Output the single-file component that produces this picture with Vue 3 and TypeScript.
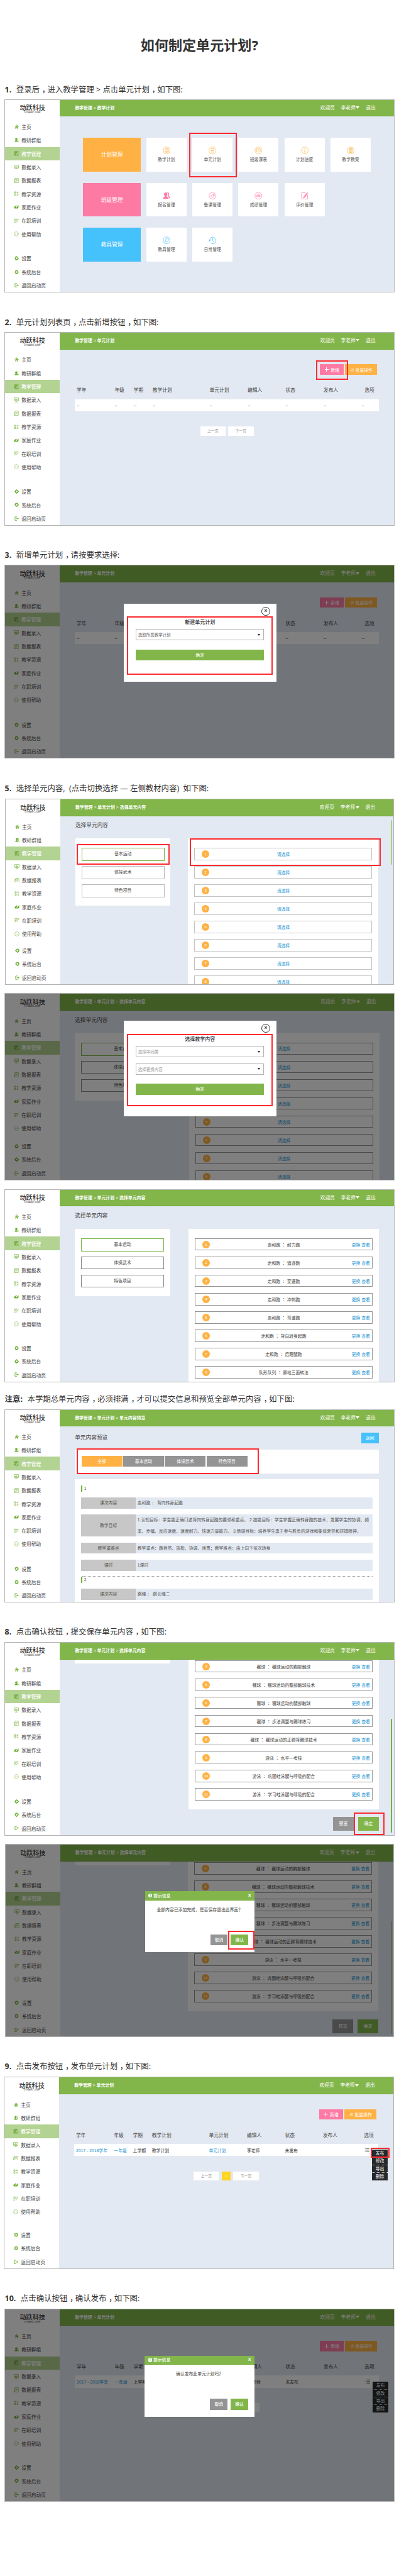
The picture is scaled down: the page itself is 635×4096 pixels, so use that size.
<script setup lang="ts">
interface NavItem { icon: string; label: string }
interface Card { icon: string; label: string }
interface Group { name: string; tone: string; cards: Card[] }
interface Shot {
  id: string
  step?: string
  text?: string
  crumbs: string[]
  view: 'home' | 'list' | 'select' | 'preview' | 'tail'
  filled?: boolean
  dim?: boolean
  form?: { title: string; fields: string[]; serif?: boolean }
  alert?: string
  marks?: string[]
  scroll?: boolean
}

const nav: NavItem[] = [
  { icon: 'i-home', label: '主页' },
  { icon: 'i-people', label: '教研群组' },
  { icon: 'i-book', label: '教学管理' },
  { icon: 'i-monitor', label: '数据录入' },
  { icon: 'i-report', label: '数据报表' },
  { icon: 'i-grid', label: '教学资源' },
  { icon: 'i-leaf', label: '家庭作业' },
  { icon: 'i-write', label: '在职培训' },
  { icon: 'i-dots', label: '使用帮助' },
]
const navFoot: NavItem[] = [
  { icon: 'i-gear', label: '设置' },
  { icon: 'i-gear', label: '系统后台' },
  { icon: 'i-exit', label: '返回启动页' },
]

const groups: Group[] = [
  {
    name: '计划管理', tone: 'orange',
    cards: [
      { icon: 'c-plan', label: '教学计划' },
      { icon: 'c-unit', label: '单元计划' },
      { icon: 'c-table', label: '班级课表' },
      { icon: 'c-gauge', label: '计划进度' },
      { icon: 'c-case', label: '教学教案' },
    ],
  },
  {
    name: '班级管理', tone: 'pink',
    cards: [
      { icon: 'i-people', label: '报名管理' },
      { icon: 'c-tag', label: '备课管理' },
      { icon: 'c-score', label: '成绩管理' },
      { icon: 'c-edit', label: '评价管理' },
    ],
  },
  {
    name: '教具管理', tone: 'blue',
    cards: [
      { icon: 'c-tool', label: '教具管理' },
      { icon: 'c-clock', label: '日常管理' },
    ],
  },
]

const columns = ['学年', '年级', '学期', '教学计划', '单元计划', '编辑人', '状态', '发布人', '选项']
const record = ['2017 - 2018学年', '一年级', '上学期', '教学计划', '单元计划', '李老师', '未发布', '']
const linked = [0, 1, 4]
const kinds = ['基本运动', '体操武术', '特色项目']
const lessons = [
  ['走和跑', '耐力跑'], ['走和跑', '追逐跑'], ['走和跑', '变速跑'], ['走和跑', '冲刺跑'],
  ['走和跑', '弯道跑'], ['走和跑', '背向转身起跑'], ['走和跑', '后蹬腿跑'], ['队形队列', '原地三面转法'],
]
const tail = [
  ['毽球', '毽球运动的胸部触球'], ['毽球', '毽球运动的腹部触球技术'], ['毽球', '毽球运动的腿部触球'],
  ['毽球', '步法调整与踢球练习'], ['毽球', '毽球运动的正脚背踢球技术'], ['游泳', '水平一考核'],
  ['游泳', '巩固蛙泳腿与呼吸的配合'], ['游泳', '学习蛙泳腿与呼吸的配合'],
]
const details = [
  { label: '课次内容', lines: ['走和跑 ： 背向转身起跑'] },
  {
    label: '教学目标',
    lines: [
      '1.认知目标：学生能正确口述背向转身起跑的要领和重点。 2.技能目标：学生掌握正确转身跑的技术，发展学生的协调、频',
      '率、步幅、反应速度、速度耐力、快速力量能力。 3.情感目标：培养学生勇于参与胜负的游戏和集体荣誉和拼搏精神。',
    ],
  },
  { label: '教学重难点', lines: ['教学重点：跑自然、放松、协调、连贯；教学难点：由上向下依次转身'] },
  { label: '课时', lines: ['1课时'] },
]

const shots: Shot[] = [
  { id: 's1', step: '1.', text: '登录后，进入教学管理 > 点击单元计划，如下图:', crumbs: ['教学管理', '教学计划'], view: 'home', marks: ['m-unit'] },
  { id: 's2', step: '2.', text: '单元计划列表页，点击新增按钮，如下图:', crumbs: ['教学管理', '单元计划'], view: 'list', marks: ['m-add'] },
  { id: 's3', step: '3.', text: '新增单元计划，请按要求选择:', crumbs: ['教学管理', '单元计划'], view: 'list', dim: true, form: { title: '新建单元计划', fields: ['选取所属教学计划'] }, marks: ['m-form1'] },
  { id: 's4', step: '5.', text: '选择单元内容,\u00a0\u00a0(点击切换选择 — 左侧教材内容)\u00a0\u00a0如下图:', crumbs: ['教学管理', '单元计划', '选择单元内容'], view: 'select', marks: ['m-kind', 'm-lesson'], scroll: true },
  { id: 's5', crumbs: ['教学管理', '单元计划', '选择单元内容'], view: 'select', dim: true, form: { title: '选择教学内容', fields: ['选择中间类', '选择更换内容'], serif: true }, marks: ['m-form2'] },
  { id: 's6', crumbs: ['教学管理', '单元计划', '选择单元内容'], view: 'select', filled: true },
  { id: 's7', step: '注意:', text: '本学期总单元内容，必须排满，才可以提交信息和预览全部单元内容，如下图:', crumbs: ['教学管理', '单元计划', '单元内容预览'], view: 'preview', marks: ['m-tabs'] },
  { id: 's8', step: '8.', text: '点击确认按钮，提交保存单元内容，如下图:', crumbs: ['教学管理', '单元计划', '选择单元内容'], view: 'tail', marks: ['m-submit'], scroll: true },
  { id: 's9', crumbs: ['教学管理', '单元计划', '选择单元内容'], view: 'tail', dim: true, alert: '全部内容已添加完成，是否保存退出此界面？', marks: ['m-confirm'], scroll: true },
  { id: 's10', step: '9.', text: '点击发布按钮，发布单元计划，如下图:', crumbs: ['教学管理', '单元计划'], view: 'list', filled: true, marks: ['m-publish'] },
  { id: 's11', step: '10.', text: '点击确认按钮，确认发布，如下图:', crumbs: ['教学管理', '单元计划'], view: 'list', filled: true, dim: true, alert: '确认发布此单元计划吗？' },
]

const pieces = (text: string): string[] => text.split(/(，)/)
</script>

<template>
  <svg class="sprite" aria-hidden="true">
    <symbol id="i-home" viewBox="0 0 24 24"><path d="M2 12 12 3l10 9" fill="none" stroke="currentColor" stroke-width="3" /><path d="M5 13.500 12 7l7 6.500V22h-4.500v-6h-5v6H5z" fill="currentColor" /></symbol>
    <symbol id="i-people" viewBox="0 0 24 24"><path d="M9 2c3.200 0 5 2.300 5 5.500 0 2.500-1 4.500-2 5.500v2c3 1 6 2 6 5v1.500H1V20c0-3 2.500-4 5-5v-2c-1.200-1-2-3-2-5.500C4 4.300 5.800 2 9 2z" fill="currentColor" /><path d="M14 2.500c3 0 4.500 2 4.500 4.600 0 2.200-1 3.900-2.300 4.900v1.500c3.500 1 6 2.500 6 5h-2.500" fill="none" stroke="currentColor" stroke-width="2.400" /></symbol>
    <symbol id="i-book" viewBox="0 0 24 24"><path d="M3 1h19v22H3zM0 5h4v3H0zm0 10h4v3H0z" fill="#7cb14b" /><path d="M20 6l-8 10-1 3 3-1 8-10z" fill="#d3e8bd" /></symbol>
    <symbol id="i-monitor" viewBox="0 0 24 24"><path d="M1.500 2h21v14h-21zM12 16v5M6 22h12M7 12V9m4 3V6m4 6V8M5 12h13" fill="none" stroke="currentColor" stroke-width="2" /></symbol>
    <symbol id="i-report" viewBox="0 0 24 24"><path d="M6 1.500h16v21H2v-15h4zM6 7v15M10 7h8m-8 4h8m-8 4h6" fill="none" stroke="currentColor" stroke-width="1.800" /></symbol>
    <symbol id="i-grid" viewBox="0 0 24 24"><path d="M3 3h6v6H3zM3 13h6v7H3zM14 4h8m-8 4h8m-8 7h8m-8 4h8" fill="none" stroke="currentColor" stroke-width="2" /></symbol>
    <symbol id="i-leaf" viewBox="0 0 24 24"><path d="M1 15c0-3 2-5 5-5 1-4 5-6 9-4l-5 7v3l3-1 9-11c2 4 1 9 0 12-1 3-3 4-5 4H6c-3 0-5-2-5-5z" fill="currentColor" /></symbol>
    <symbol id="i-write" viewBox="0 0 24 24"><path d="M1 4h19M1 9h14M1 14h10M1 19h8M23 4l-8 12-2 4" fill="none" stroke="currentColor" stroke-width="2" /></symbol>
    <symbol id="i-dots" viewBox="0 0 24 24"><circle cx="12" cy="12" r="10.500" fill="none" stroke="currentColor" stroke-width="1.500" /><path d="M6 11h2.500v2.500H6zm5 0h2.500v2.500H11zm5 0h2.500v2.500H16z" fill="currentColor" /></symbol>
    <symbol id="i-gear" viewBox="0 0 24 24"><circle cx="12" cy="12" r="6.500" fill="none" stroke="currentColor" stroke-width="4" /><path d="M12 1v4m0 14v4M1 12h4m14 0h4M4.500 4.500l2.500 2.500m10 10 2.500 2.500m0-15L17 7M7 17l-2.500 2.500" stroke="currentColor" stroke-width="3.500" /></symbol>
    <symbol id="i-exit" viewBox="0 0 24 24"><path d="M13 3H3v18h10M9 12h9" fill="none" stroke="currentColor" stroke-width="3" /><path d="M16 6.500 23 12l-7 5.500z" fill="currentColor" /></symbol>
    <symbol id="c-plan" viewBox="0 0 24 24"><g fill="none" stroke="currentColor" stroke-width="1.300"><circle cx="12" cy="12" r="10.500" /><rect x="7" y="6.500" width="10.500" height="11" rx="1.500" /><path d="M7 14.500h10.500M10 7v4h5V7M12.500 7v2" /></g></symbol>
    <symbol id="c-unit" viewBox="0 0 24 24"><g fill="none" stroke="currentColor" stroke-width="1.200"><circle cx="12" cy="12" r="11" /><path d="M6.500 7h11m-11 5h11m-11 5h11" stroke-width="1.800" /></g></symbol>
    <symbol id="c-table" viewBox="0 0 24 24"><g fill="none" stroke="currentColor" stroke-width="1.300"><circle cx="12" cy="12" r="10.500" /><path d="M6.500 7h4.500l1 1 1-1h4.500v9.500H13l-1 1-1-1H6.500zM12 8v5" /></g></symbol>
    <symbol id="c-gauge" viewBox="0 0 24 24"><g fill="none" stroke="currentColor" stroke-width="1.300"><circle cx="12" cy="12" r="10.500" /><path d="M12 5v10M6 12H4.500m15 0H18M7.500 7.500l-1-1m10 1 1-1" /><circle cx="12" cy="16.500" r="1.600" /></g></symbol>
    <symbol id="c-case" viewBox="0 0 24 24"><g fill="none" stroke="currentColor" stroke-width="1.300"><circle cx="12" cy="12" r="10.500" /><rect x="7.500" y="6.500" width="9" height="11.500" fill="currentColor" fill-opacity=".45" /><path d="M10 5.500h4v2h-4z" /></g></symbol>
    <symbol id="c-tag" viewBox="0 0 24 24"><g fill="none" stroke="currentColor" stroke-width="1.300"><circle cx="12" cy="12" r="10.500" /><path d="M6 13l6-6 5.500.500.500 4.500-6.500 6z" /><circle cx="14.500" cy="10" r="1.500" /></g></symbol>
    <symbol id="c-score" viewBox="0 0 24 24"><g fill="none" stroke="currentColor" stroke-width="1.300"><circle cx="12" cy="12" r="10.500" /><path d="M7 10l-1 6M10 9.500h2.500l-.800 6H9.200zM14.800 9.500h2.700l-.800 6H14zM6 7h10" /></g></symbol>
    <symbol id="c-edit" viewBox="0 0 24 24"><path d="M14 3H2v20h18V9" fill="none" stroke="currentColor" stroke-width="1.500" /><path d="M17 4l3 3-9 11-5 3 2-5.500zM19 1.500l3 3-1 1.200-3-3z" fill="currentColor" /></symbol>
    <symbol id="c-tool" viewBox="0 0 24 24"><g fill="none" stroke="currentColor" stroke-width="1.300"><circle cx="12" cy="12" r="10.500" /><path d="M9 13c-1-4 2-7 5-7s5 3 4 5.500-4 4.500-7 3.500l-4 3-1-1z" /></g></symbol>
    <symbol id="c-clock" viewBox="0 0 24 24"><path d="M3 13.500A10 10.300 0 1 1 7 20.500M12.500 5v7l5 5.500" fill="none" stroke="currentColor" stroke-width="1.500" /><path d="M.300 11h5.400L3 15.500z" fill="currentColor" /></symbol>
    <symbol id="i-batch" viewBox="0 0 24 24"><g fill="none" stroke="currentColor" stroke-width="2"><circle cx="6.500" cy="15.500" r="4" /><circle cx="17" cy="16" r="5" /><circle cx="17" cy="7" r="3.500" /><path d="M4 8l7-4" /></g></symbol>
    <symbol id="i-menu" viewBox="0 0 24 24"><path d="M1 4h3m3 0h16M1 12h3m3 0h16M1 20h3m3 0h16" stroke="currentColor" stroke-width="2.400" /></symbol>
  </svg>

  <main class="page">
    <h1>如何制定单元计划?</h1>

    <section v-for="s in shots" :key="s.id" :class="['block', s.id]">
      <p v-if="s.step" class="step">
        <b>{{ s.step }}</b><span v-for="(p, i) in pieces(s.text ?? '')" :key="i" :class="{ comma: p === '，' }">{{ p }}</span>
      </p>

      <div class="shot">
        <aside class="side">
          <div class="logo"><strong>动跃科技</strong><small>DYNAMIC JUMP</small></div>
          <ul class="nav">
            <li v-for="(n, i) in nav" :key="n.label" :class="{ on: i === 2 }">
              <svg :class="['ico', n.icon]"><use :href="'#' + n.icon" /></svg>{{ n.label }}
            </li>
          </ul>
          <ul class="nav foot">
            <li v-for="n in navFoot" :key="n.label"><svg :class="['ico', n.icon]"><use :href="'#' + n.icon" /></svg>{{ n.label }}</li>
          </ul>
        </aside>

        <div class="main">
          <header class="bar">
            <div class="crumbs">
              <template v-for="(c, i) in s.crumbs" :key="c"><i v-if="i"> &gt; </i><b>{{ c }}</b></template>
            </div>
            <div class="user"><span>欢迎页</span><span class="who">李老师<i class="tri"></i></span><span>退出</span></div>
          </header>

          <div v-if="s.view === 'home'" class="home">
            <div v-for="g in groups" :key="g.name" :class="['group', g.tone]">
              <div class="tile">{{ g.name }}</div>
              <div v-for="c in g.cards" :key="c.label" class="card">
                <svg><use :href="'#' + c.icon" /></svg>
                <span>{{ c.label }}</span>
              </div>
            </div>
          </div>

          <div v-else-if="s.view === 'list'" class="list">
            <div class="tools">
              <span class="btn add"><i class="plus"></i>新增</span>
              <span class="btn batch"><svg><use href="#i-batch" /></svg>批量操作</span>
            </div>
            <div class="row head"><span v-for="c in columns" :key="c">{{ c }}</span></div>
            <div v-if="s.filled" class="row body">
              <span v-for="(c, i) in record" :key="i" :class="{ link: linked.includes(i) }">{{ c }}</span>
              <span class="opt"><svg><use href="#i-menu" /></svg></span>
            </div>
            <div v-else class="row body"><span v-for="c in columns" :key="c">--</span></div>
            <div class="pager"><span>上一页</span><em v-if="s.filled">1</em><span>下一页</span></div>
          </div>

          <div v-else-if="s.view === 'select'" class="select">
            <h2>选择单元内容</h2>
            <div class="cols">
              <div class="kinds">
                <span v-for="(k, i) in kinds" :key="k" :class="{ on: i === 0, dark: s.filled || s.dim }">{{ k }}</span>
              </div>
              <div class="lessons">
                <div v-for="(l, i) in lessons" :key="i" :class="['lesson', { dark: s.filled || s.dim }]">
                  <b>{{ i + 1 }}</b>
                  <template v-if="s.filled">
                    <span>{{ l[0] }} <i>：</i> {{ l[1] }}</span><a>更换 查看</a>
                  </template>
                  <span v-else class="link">请选择</span>
                </div>
              </div>
            </div>
          </div>

          <div v-else-if="s.view === 'tail'" class="tail">
            <div class="cols">
              <div class="stub"></div>
              <div class="lessons">
                <div v-for="(l, i) in tail" :key="i" class="lesson dark">
                  <b>{{ i + 4 }}</b><span>{{ l[0] }} <i>：</i> {{ l[1] }}</span><a>更换 查看</a>
                </div>
              </div>
            </div>
            <div class="actions"><span>预览</span><span class="ok">确定</span></div>
          </div>

          <div v-else class="preview">
            <div class="title"><h2>单元内容预览</h2><span class="back">返回</span></div>
            <div class="tabs"><span class="on">全部</span><span v-for="k in kinds" :key="k">{{ k }}</span></div>
            <div class="sheet">
              <div class="no">1</div>
              <div v-for="d in details" :key="d.label" class="field">
                <div class="label">{{ d.label }}</div>
                <div class="value"><p v-for="l in d.lines" :key="l">{{ l }}</p></div>
              </div>
              <div class="no second">2</div>
              <div class="field">
                <div class="label">课次内容</div>
                <div class="value"><p>跳绳 ： 跳长绳二</p></div>
              </div>
            </div>
          </div>
        </div>

        <div v-if="s.scroll" class="scroll"></div>
        <div v-if="s.view === 'list' && s.filled" class="menu">
          <span>发布</span><span>修改</span><span>导出</span><span>删除</span>
        </div>
        <div v-if="s.dim" class="shade"></div>

        <div v-if="s.form" class="form">
          <span class="close">×</span>
          <h3>{{ s.form.title }}</h3>
          <div v-for="f in s.form.fields" :key="f" :class="['field-select', { serif: s.form.serif }]">{{ f }}<i class="tri"></i></div>
          <div class="go">确定</div>
        </div>
        <div v-if="s.alert" class="alert">
          <div class="alert-head"><i>!</i><b>提示信息</b><span>×</span></div>
          <p>{{ s.alert }}</p>
          <div class="alert-foot"><span>取消</span><span class="ok">确认</span></div>
        </div>
        <div v-for="m in s.marks" :key="m" :class="['mark', m]"></div>
      </div>
    </section>
  </main>
</template>

<style>
html, body { margin: 0; background: #fff; }
</style>

<style scoped>
.sprite { position: absolute; width: 0; height: 0; }
.page {
  zoom: 0.69;
  width: 920px;
  height: 5936px;
  box-sizing: border-box;
  padding-top: 83.700px;
  overflow: hidden;
  color: #333;
  background: #fff;
  font-family: "Noto Sans", "Noto Sans CJK SC", sans-serif;
}
.page *, .page *::before { box-sizing: border-box; }
h1 { margin: 0 0 71.300px; font-size: 32px; line-height: 40px; font-weight: 700; text-align: center; }
h2, h3, p, ul { margin: 0; padding: 0; font-weight: 400; list-style: none; }
i, em { font-style: normal; }
.step { height: 24px; padding-left: 11px; font-size: 18px; line-height: 24px; white-space: nowrap; }
.step b { margin-right: 11px; }
.comma { display: inline-block; width: 1em; text-indent: .3em; }

.shot {
  position: relative;
  display: flex;
  width: 899px;
  height: 446px;
  margin-left: 10.600px;
  border: 1px solid #b4b4b4;
  font-family: "Liberation Sans", "Noto Sans CJK SC", sans-serif;
  overflow: hidden;
}
.s1 .shot { margin-top: 9.600px; height: 445.700px; }
.s2 { margin-top: 58px; }
.s2 .shot { margin-top: 9.100px; height: 446.400px; }
.s3 { margin-top: 56.200px; }
.s3 .shot { margin-top: 10.300px; height: 446.400px; }
.s4 { margin-top: 57px; }
.s4 .shot { margin: 11.600px 0 0 11.700px; width: 897px; height: 428.400px; }
.s5 { margin-top: 19.600px; }
.s5 .shot { width: 900px; height: 431px; }
.s6 { margin-top: 20px; }
.s6 .shot { height: 445px; }
.s7 { margin-top: 27.700px; }
.s7 .shot { margin-top: 10.500px; height: 446.200px; }
.s8 { margin-top: 56.300px; }
.s8 .shot { margin-top: 10.400px; height: 445.900px; }
.s9 { margin-top: 20px; }
.s9 .shot { margin-left: 11.500px; width: 897px; height: 444px; }
.s10 { margin-top: 56.700px; }
.s10 .shot { margin: 11.500px 0 0 9.100px; height: 442.800px; }
.s11 { margin-top: 56.700px; }
.s11 .shot { margin-top: 10.400px; height: 445.300px; }

.side { display: flex; flex-direction: column; flex: none; width: 125.700px; background: #fff; }
.logo { height: 46.700px; flex: none; display: flex; flex-direction: column; align-items: center; padding-top: 10.500px; color: #333; }
.logo strong { font-size: 14.600px; line-height: 17px; font-weight: 500; }
.logo small { font-size: 5px; line-height: 5px; letter-spacing: -.050px; }
.nav li { display: flex; align-items: center; height: 30.900px; padding-left: 20.500px; font-size: 11.200px; color: #444; white-space: nowrap; }
.nav li.on { background: #b2d391; color: #fff; font-weight: 500; }
.nav.foot { margin-top: auto; }
.ico { flex: none; width: 11.500px; height: 11.500px; margin-right: 5.700px; color: #6aaf2e; }
.ico.i-home, .ico.i-people, .ico.i-gear, .ico.i-exit { width: 10.500px; height: 10.500px; margin: 0 6.200px 0 .500px; }

.main { flex: 1; min-width: 0; display: flex; flex-direction: column; background: #e3e9f2; overflow: hidden; }
.bar {
  flex: none; display: flex; justify-content: space-between; height: 38.500px; padding: 0 42px 0 35px;
  background: #82b64a; border-bottom: 1px solid #6fa934; color: #fff; line-height: 38.500px; white-space: nowrap;
}
.crumbs { font-size: 10px; }
.user { display: flex; gap: 14.300px; font-size: 11.200px; }
.tri { display: inline-block; border: 4.500px solid transparent; border-top: 6.500px solid currentColor; border-bottom: 0; margin-left: 1px; vertical-align: 1px; }

.home { display: flex; flex-direction: column; gap: 26.100px; padding: 49px 0 0 54.200px; }
.group { display: flex; gap: 13.500px; height: 77.600px; }
.tile { width: 132.200px; display: flex; align-items: center; justify-content: center; color: #fff; font-size: 12.600px; }
.orange { color: #ffb143; } .pink { color: #fd7aa5; } .blue { color: #45c1fb; }
.orange .tile { background: #ffb143; } .pink .tile { background: #fd7aa5; } .blue .tile { background: #45c1fb; }
.card { width: 92.700px; padding-top: 20.500px; background: #fff; text-align: center; }
.card svg { display: block; width: 18px; height: 18px; margin: 0 auto; }
.card span { display: block; margin-top: 4px; font-size: 9.900px; line-height: 16px; color: #555; }

.list { padding: 34.500px 34.400px 0 35px; }
.tools { display: flex; justify-content: flex-end; gap: 3px; padding-right: 3.500px; }
.btn { display: flex; align-items: center; justify-content: center; gap: 4px; height: 24px; color: #fff; font-size: 9.900px; }
.add { width: 54.700px; background: #fd7aa5; }
.batch { width: 74.500px; background: #ffb143; }
.batch svg { width: 9px; height: 9px; }
.plus { width: 10px; height: 10px; background: linear-gradient(#fff, #fff) center / 10px 2px no-repeat, linear-gradient(#fff, #fff) center / 2px 10px no-repeat; }
.row { display: grid; grid-template-columns: 2fr 1fr 1fr 3fr 2fr 2fr 2fr 2fr 1fr; align-items: center; white-space: nowrap; }
.row span { padding-left: 4px; min-width: 0; }
.head { height: 43.200px; margin-top: 13px; font-size: 11.200px; color: #444; }
.head span:last-child { padding-left: 11px; }
.body { height: 28px; background: #fff; font-size: 9.900px; color: #333; }
.row .link, .link { color: #1f97d4; }
.opt svg { display: block; width: 12.500px; height: 11px; margin-left: 7.500px; }
.pager { display: flex; justify-content: center; gap: 5.700px; margin-top: 35px; height: 21px; font-size: 8.400px; line-height: 21px; text-align: center; color: #999; }
.pager span { width: 58.800px; background: #fff; }
.pager em { width: 21.300px; background: #ffd522; color: #fff; }

.select h2, .preview h2 { font-size: 12.600px; line-height: 25px; color: #444; }
.select { padding: 10px 34.400px 0 35px; }
.select h2 { margin-bottom: 17px; }
.s4 .select { padding-top: 9.500px; }
.cols { display: flex; justify-content: space-between; align-items: flex-start; }
.kinds { display: flex; flex-direction: column; gap: 12.700px; width: 219.600px; height: 154.700px; padding: 21.500px 14.400px 0; background: #fff; }
.kinds span { height: 29.400px; border: 1px solid #bbb; font-size: 9.900px; line-height: 27.500px; text-align: center; color: #444; }
.kinds span.dark { border-color: #8a8a8a; }
.kinds span.on { height: 30.400px; margin-bottom: -1px; border: 1.500px solid #7ab540; }
.lessons { width: 438.800px; padding: 21.500px 14.400px 21px; background: #fff; }
.lesson { position: relative; display: flex; align-items: center; height: 28.300px; margin-bottom: 13.800px; border: 1px solid #c4c4c4; font-size: 9.900px; color: #444; }
.lesson:last-child { margin-bottom: 0; }
.lesson.dark { border-color: #949494; }
.lesson b { width: 17.600px; height: 17.600px; margin-left: 15.700px; border-radius: 50%; background: #ffb143; color: #fff; font-size: 9px; font-weight: 400; line-height: 17.600px; text-align: center; }
.lesson span { flex: 1; margin-right: 33.300px; text-align: center; white-space: nowrap; }
.lesson a { position: absolute; right: 4.500px; color: #1f97d4; white-space: nowrap; }
.lesson i { font-family: "Noto Sans CJK TC", sans-serif; }

.tail { padding: 0 34.400px 0 35px; }
.tail .lessons { padding-top: 1.800px; }
.stub { width: 219.600px; height: 8.600px; background: #fff; }
.actions { display: flex; justify-content: flex-end; gap: 10.400px; margin-top: 17.600px; }
.actions span { width: 47.600px; height: 31.800px; background: #949494; color: #fff; font-size: 9.900px; line-height: 31.800px; text-align: center; }
.actions .ok, .alert-foot .ok { background: #82b64a; }

.preview { padding: 14px 34.400px 0 35px; }
.title { display: flex; justify-content: space-between; height: 39px; }
.back { width: 40.600px; height: 25px; background: #45c1fb; color: #fff; font-size: 9.900px; line-height: 25px; text-align: center; }
.tabs { display: flex; gap: 1.700px; height: 54.900px; padding: 15px; background: #fff; }
.tabs span { width: 94.500px; height: 25px; background: #949494; color: #fff; font-size: 9.900px; line-height: 25px; text-align: center; }
.tabs .on { background: #ffb143; }
.sheet { margin-top: 14.100px; padding: 14px 14.400px 0; background: #fff; height: 300px; font-size: 9.900px; color: #555; }
.no { height: 14px; margin-bottom: 14px; padding-left: 4px; border-left: 3px solid #74b236; line-height: 14px; }
.no.second { position: relative; margin: 1px 0 13.500px; }
.no.second::before { content: ""; position: absolute; left: 0; right: 0; top: -1.500px; border-top: 1px dotted #999; }
.field { display: grid; grid-template-columns: 126px 1fr; margin-bottom: 14px; background: #e3e9f2; line-height: 25.300px; }
.label { display: flex; align-items: center; justify-content: center; background: #c7c7c7; }
.value { padding-left: 4px; white-space: nowrap; }

.scroll { position: absolute; right: 3.500px; top: 46.700px; width: 2.500px; height: 103.700px; border-radius: 2px; background: #a9cf83; }
.s8 .scroll { top: 175.600px; height: 261.700px; background: #76b13c; }
.s9 .scroll { top: 175px; height: 260px; background: #76b13c; }
.menu { position: absolute; left: 847.900px; top: 166.200px; width: 35.400px; background: #26282b; color: #fff; font-size: 9.900px; text-align: center; }
.menu span { display: block; height: 17.800px; line-height: 17.800px; border-bottom: 1px dotted #ccc; }
.menu span:last-child { border: 0; }
.s11 .menu { top: 167.500px; }

.shade { position: absolute; inset: 0; background: rgba(0, 0, 0, .5); }
.form { position: absolute; left: 273.600px; top: 87.700px; width: 351.500px; height: 180px; padding: 6.900px 28px 0 27.500px; background: #fff; }
.s5 .form { top: 61.400px; height: 220.700px; }
.close { display: block; width: 20.700px; height: 20.700px; margin: 0 -14.200px 0 auto; border: 1px solid #333; border-radius: 50%; font-size: 12px; font-weight: 700; line-height: 18.500px; text-align: center; }
.form h3 { margin-top: 6px; font-size: 11.600px; line-height: 20px; font-weight: 500; text-align: center; }
.field-select { display: flex; justify-content: space-between; align-items: center; height: 26px; margin: 5px 0 14.300px; padding: 0 8px 0 4px; border: 1px solid #b5b5b5; font-size: 9.400px; color: #666; }
.field-select + .field-select { margin-top: 0; }
.field-select.serif { color: #999; }
.field-select .tri { border-width: 5.500px 4px 0; color: #222; border-top-color: #222; }
.go { height: 25.300px; margin-top: 21px; background: #82b64a; color: #fff; font-size: 9.900px; line-height: 25.300px; text-align: center; }

.alert { position: absolute; left: 322px; top: 107px; width: 252.400px; height: 140.500px; background: #fff; }
.s9 .alert { left: 321.400px; }
.alert-head { display: flex; align-items: center; height: 21.100px; padding: 0 7.500px; background: #82b64a; border-bottom: 1px solid #6fa934; color: #fff; font-size: 9.900px; }
.alert-head i { width: 9.500px; height: 9.500px; margin-right: 2.500px; border-radius: 50%; background: #fff; color: #6fa934; font-size: 8px; font-weight: 700; line-height: 9.500px; text-align: center; }
.alert-head b { font-weight: 500; }
.alert-head span { margin-left: auto; font-size: 12px; font-weight: 700; }
.alert p { margin-top: 11.500px; font-size: 9.900px; line-height: 20px; text-align: center; color: #444; white-space: nowrap; }
.alert-foot { display: flex; justify-content: flex-end; gap: 7px; margin-top: 47.300px; padding-right: 14px; }
.alert-foot span { width: 40.400px; height: 25px; background: #949494; color: #fff; font-size: 9.900px; font-weight: 500; line-height: 25px; text-align: center; }

.mark { position: absolute; border: 3px solid #fb2b2f; }
.m-unit { left: 424.900px; top: 75.700px; width: 109px; height: 102.800px; }
.m-add { left: 717px; top: 64.200px; width: 73.500px; height: 44.500px; }
.m-form1 { left: 281.200px; top: 116px; width: 335.200px; height: 136px; }
.m-kind { left: 163.900px; top: 102px; width: 214.500px; height: 47.600px; }
.m-lesson { left: 424px; top: 89px; width: 441px; height: 64px; }
.m-form2 { left: 281.200px; top: 92px; width: 335.200px; height: 166.700px; }
.m-tabs { left: 165px; top: 89.500px; width: 419.800px; height: 59px; }
.m-submit { left: 804.200px; top: 392px; width: 70.500px; height: 51px; }
.m-confirm { left: 512.700px; top: 198px; width: 61.500px; height: 43px; }
.m-publish { left: 844.500px; top: 161.800px; width: 44px; height: 23.800px; }
</style>
